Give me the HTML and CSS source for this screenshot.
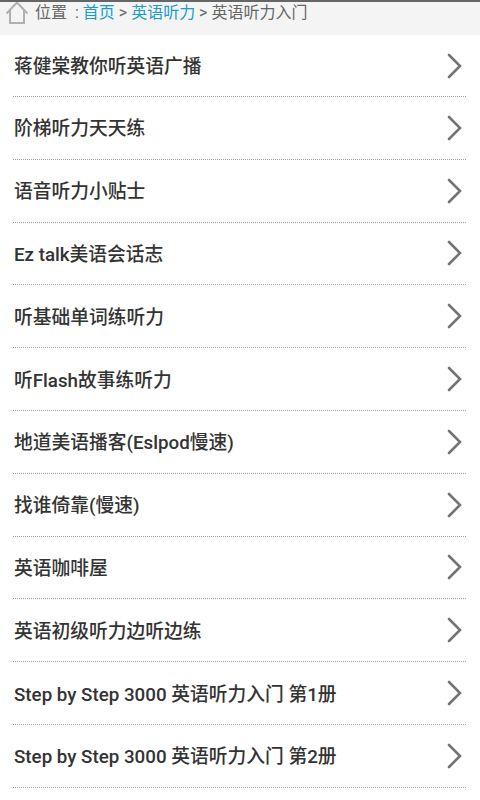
FILE: index.html
```html
<!DOCTYPE html>
<html lang="zh-CN">
<head>
  <meta charset="UTF-8" />
  <title>英语听力入门</title>
  <link rel="stylesheet" href="styles.css">
</head>
<body>
  <svg width="0" height="0" class="defs">
    <symbol id="arrow" viewBox="0 0 15 26">
      <path d="M2 2 L13 13 L2 24" fill="none" stroke="#747474" stroke-width="2.6" stroke-linecap="round" stroke-linejoin="miter"/>
    </symbol>
  </svg>
  <div class="crumbs">
    <svg class="home" width="24" height="25" viewBox="0 0 24 25">
      <path d="M1.5 13.5 L12 2.5 L22.5 13.5 M5 10.5 V23 H19 V10.5" fill="none" stroke="#b0b0b0" stroke-width="2"/>
    </svg>
    <span class="trail">位置&nbsp; :&nbsp;<a>首页</a> &gt; <a>英语听力</a> &gt; 英语听力入门</span>
  </div>
  <ul class="list">
    <li><span>蒋健棠教你听英语广播</span><svg class="arrow"><use href="#arrow"/></svg></li>
    <li><span>阶梯听力天天练</span><svg class="arrow"><use href="#arrow"/></svg></li>
    <li><span>语音听力小贴士</span><svg class="arrow"><use href="#arrow"/></svg></li>
    <li><span>Ez talk美语会话志</span><svg class="arrow"><use href="#arrow"/></svg></li>
    <li><span>听基础单词练听力</span><svg class="arrow"><use href="#arrow"/></svg></li>
    <li><span>听Flash故事练听力</span><svg class="arrow"><use href="#arrow"/></svg></li>
    <li><span>地道美语播客(Eslpod慢速)</span><svg class="arrow"><use href="#arrow"/></svg></li>
    <li><span>找谁倚靠(慢速)</span><svg class="arrow"><use href="#arrow"/></svg></li>
    <li><span>英语咖啡屋</span><svg class="arrow"><use href="#arrow"/></svg></li>
    <li><span>英语初级听力边听边练</span><svg class="arrow"><use href="#arrow"/></svg></li>
    <li><span>Step by Step 3000 英语听力入门 第1册</span><svg class="arrow"><use href="#arrow"/></svg></li>
    <li><span>Step by Step 3000 英语听力入门 第2册</span><svg class="arrow"><use href="#arrow"/></svg></li>
  </ul>
</body>
</html>
```

FILE: styles.css
```css
html, body {
  height: 800px;
  overflow: hidden;
}
body {
  margin: 0;
  background: #fff;
  font-family: Roboto, "Noto Sans CJK SC", sans-serif;
}
.defs {
  display: block;
}
.crumbs {
  height: 33px;
  border-top: 2px solid #666;
  background: #f4f4f4;
  display: flex;
  align-items: flex-start;
  padding-left: 5px;
  overflow: hidden;
}
.home {
  flex: none;
  margin-top: -2px;
}
.trail {
  margin-left: 6px;
  font-size: 16px;
  line-height: 22px;
  color: #666;
  white-space: nowrap;
}
.trail a {
  color: #1a9ccc;
}
.list {
  list-style: none;
  margin: 0 0 0 13px;
  padding: 0;
  width: 453px;
}
.list li {
  box-sizing: border-box;
  height: 62.8px;
  padding-bottom: 2px;
  padding-left: 1px;
  border-bottom: 1px dotted #a0a0a0;
  display: flex;
  align-items: center;
  justify-content: space-between;
  font-size: 18.75px;
  font-weight: 500;
  color: #333;
}
.list li:first-child {
  height: 62px;
}
.arrow {
  width: 15px;
  height: 26px;
  margin-right: 4px;
  margin-bottom: -2px;
}
```
